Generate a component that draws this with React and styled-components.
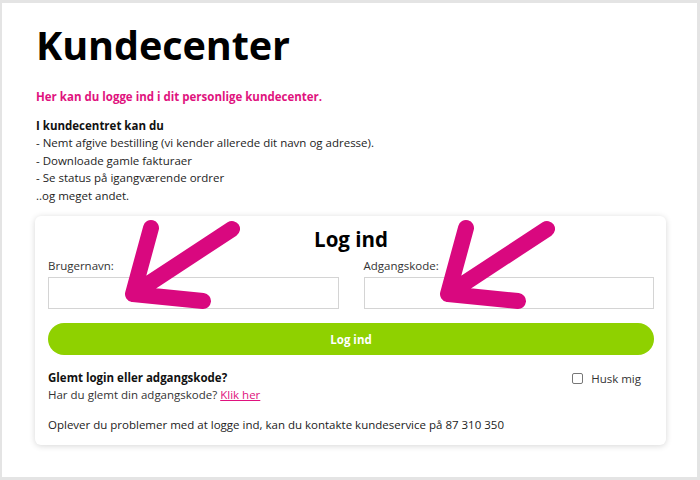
import React, { useState } from 'react';
import styled, { createGlobalStyle } from 'styled-components';

const GlobalStyle = createGlobalStyle`
  html, body {
    margin: 0;
    padding: 0;
    background: #ffffff;
  }
  body {
    font-family: "Open Sans", "Noto Sans", sans-serif;
    color: #222;
  }
`;

const Frame = styled.div`
  position: relative;
  width: 700px;
  height: 480px;
  box-sizing: border-box;
  border-top: 3px solid #e4e4e4;
  border-left: 2px solid #e4e4e4;
  border-right: 3px solid #e4e4e4;
  border-bottom: 3px solid #e4e4e4;
  background: #ffffff;
  overflow: hidden;
`;

const Content = styled.div`
  padding: 17px 30px 0 34px;
`;

const Title = styled.h1`
  margin: 0;
  font-size: 39.6px;
  line-height: 50px;
  font-weight: 700;
  color: #000;
  letter-spacing: -0.1px;
`;

const Lead = styled.p`
  margin: 18px 0 0;
  font-size: 11.5px;
  line-height: 17px;
  font-weight: 700;
  color: #e0127e;
`;

const Intro = styled.div`
  margin-top: 12px;
  font-size: 11.5px;
  line-height: 17.4px;
  color: #1d1d1d;
`;

const IntroHead = styled.div`
  font-weight: 700;
  color: #111;
`;

const Card = styled.div`
  margin: 12px 0 0 -1px;
  width: 631px;
  box-sizing: border-box;
  background: #fff;
  border-radius: 6px;
  box-shadow: 0 1px 6px rgba(0, 0, 0, 0.16);
  padding: 10px 12px 12px 13px;
`;

const CardTitle = styled.h2`
  margin: 0 0 4px;
  text-align: center;
  font-size: 20.5px;
  line-height: 27px;
  font-weight: 700;
  color: #000;
`;

const Fields = styled.div`
  display: grid;
  grid-template-columns: 1fr 1fr;
  column-gap: 25px;
`;

const Field = styled.label`
  display: flex;
  flex-direction: column;
  gap: 3px;
  font-size: 11.5px;
  line-height: 17px;
  color: #333;
`;

const Input = styled.input`
  height: 32px;
  box-sizing: border-box;
  border: 1px solid #d4d4d4;
  border-radius: 0;
  padding: 0 8px;
  font: inherit;
  outline: none;
`;

const Button = styled.button`
  display: block;
  width: 100%;
  height: 32px;
  margin-top: 14px;
  border: 0;
  border-radius: 16px;
  background: #8fd100;
  color: #fff;
  font-family: inherit;
  font-size: 11.5px;
  font-weight: 700;
  cursor: pointer;
`;

const Row = styled.div`
  display: flex;
  justify-content: space-between;
  align-items: flex-start;
  margin-top: 15px;
`;

const Help = styled.div`
  font-size: 11.5px;
  line-height: 16.5px;
  color: #333;
`;

const HelpHead = styled.div`
  font-weight: 700;
  color: #111;
`;

const Link = styled.a`
  color: #e0127e;
  text-decoration: underline;
`;

const Remember = styled.label`
  display: flex;
  align-items: center;
  gap: 8px;
  margin-right: 13px;
  font-size: 11.5px;
  line-height: 17px;
  color: #333;
`;

const Check = styled.input`
  appearance: none;
  margin: 0;
  width: 11px;
  height: 11px;
  border: 1px solid #777;
  border-radius: 2px;
  background: #fff;
  &:checked {
    background: #8fd100;
    border-color: #8fd100;
  }
`;

const Note = styled.p`
  margin: 13px 0 0;
  font-size: 11.5px;
  line-height: 17px;
  color: #222;
`;

const Arrows = styled.svg`
  position: absolute;
  top: -3px;
  left: -2px;
  pointer-events: none;
`;

const Arrow = ({ dx }) => (
  <g transform={`translate(${dx} 0)`}>
    <path
      d="M151 228 L133 294 L203 301 M133 294 L232 229"
      fill="none"
      stroke="#d9087f"
      strokeWidth="16"
      strokeLinecap="round"
      strokeLinejoin="round"
    />
  </g>
);

export default function App() {
  const [remember, setRemember] = useState(false);

  return (
    <>
      <GlobalStyle />
      <Frame>
        <Content>
          <Title>Kundecenter</Title>
          <Lead>Her kan du logge ind i dit personlige kundecenter.</Lead>
          <Intro>
            <IntroHead>I kundecentret kan du</IntroHead>
            <div>- Nemt afgive bestilling (vi kender allerede dit navn og adresse).</div>
            <div>- Downloade gamle fakturaer</div>
            <div>- Se status på igangværende ordrer</div>
            <div>..og meget andet.</div>
          </Intro>

          <Card>
            <CardTitle>Log ind</CardTitle>
            <Fields>
              <Field>
                Brugernavn:
                <Input type="text" />
              </Field>
              <Field>
                Adgangskode:
                <Input type="password" />
              </Field>
            </Fields>
            <Button>Log ind</Button>
            <Row>
              <Help>
                <HelpHead>Glemt login eller adgangskode?</HelpHead>
                Har du glemt din adgangskode? <Link href="#">Klik her</Link>
              </Help>
              <Remember>
                <Check
                  type="checkbox"
                  checked={remember}
                  onChange={(e) => setRemember(e.target.checked)}
                />
                Husk mig
              </Remember>
            </Row>
            <Note>
              Oplever du problemer med at logge ind, kan du kontakte kundeservice på 87 310 350
            </Note>
          </Card>
        </Content>

        <Arrows width="700" height="480" viewBox="0 0 700 480">
          <Arrow dx={0} />
          <Arrow dx={315} />
        </Arrows>
      </Frame>
    </>
  );
}
